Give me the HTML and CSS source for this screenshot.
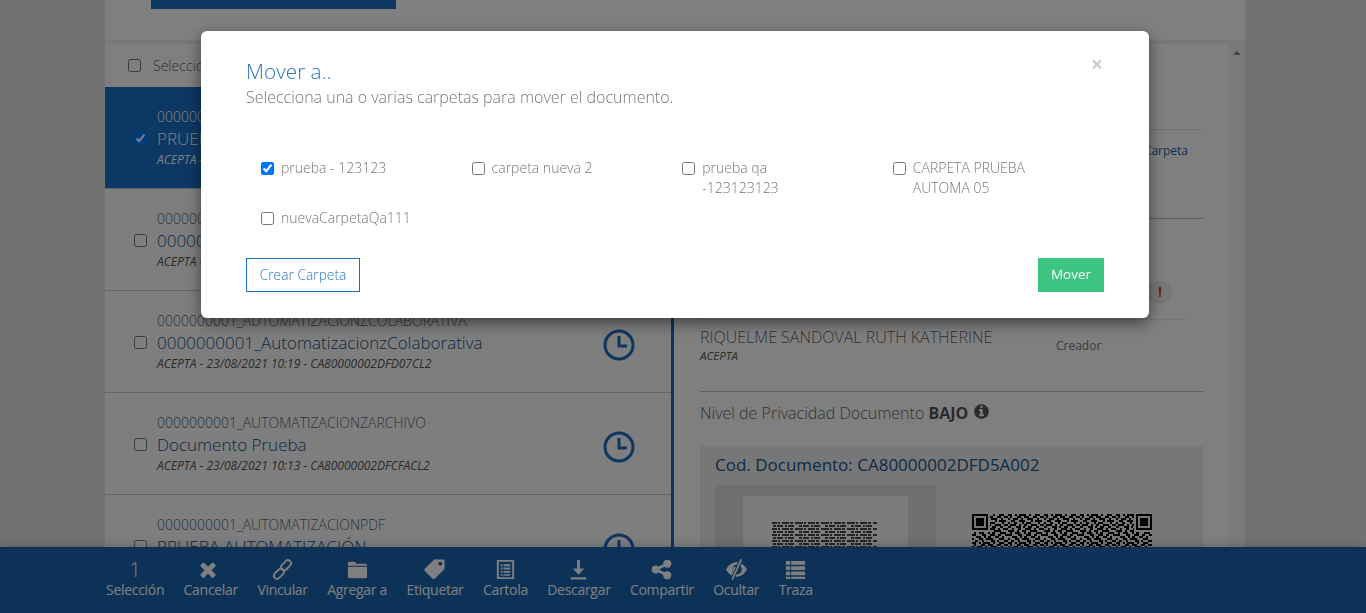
FILE: index.html
```html
<!DOCTYPE html>
<html lang="en">
<head>
  <meta charset="UTF-8">
  <meta name="viewport" content="width=device-width, initial-scale=1.0">
  <title>Mover a..</title>
  <link rel="stylesheet" href="styles.css">
</head>
<body>
  <svg class="defs" width="0" height="0">
    <defs>
      <g id="clock">
        <circle cx="16" cy="16" r="14" fill="none" stroke="currentColor" stroke-width="3"/>
        <path d="M16 7v10h8" fill="none" stroke="currentColor" stroke-width="3"/>
      </g>
      <pattern id="qrTile" width="36" height="28" patternUnits="userSpaceOnUse">
        <path d="M0 0h4v2H0zM7 0h2v2H7zM11 0h7v2h-7zM21 0h2v2h-2zM27 0h5v2h-5zM2 2h2v2H2zM9 2h4v2H9zM16 2h5v2h-5zM25 2h4v2h-4zM32 2h4v2h-4zM0 4h2v2H0zM5 4h5v2H5zM13 4h2v2h-2zM19 4h6v2h-6zM29 4h2v2h-2zM3 6h4v2H3zM11 6h6v2h-6zM23 6h2v2h-2zM27 6h7v2h-7zM0 8h2v2H0zM6 8h3v2H6zM14 8h2v2h-2zM18 8h5v2h-5zM30 8h2v2h-2zM2 10h6v2H2zM11 10h2v2h-2zM16 10h3v2h-3zM23 10h6v2h-6zM32 10h4v2h-4zM0 12h3v2H0zM8 12h5v2H8zM15 12h2v2h-2zM20 12h4v2h-4zM28 12h3v2h-3zM4 14h2v2H4zM10 14h3v2h-3zM17 14h6v2h-6zM26 14h2v2h-2zM31 14h5v2h-5zM0 16h6v2H0zM9 16h2v2H9zM14 16h4v2h-4zM22 16h7v2h-7zM2 18h2v2H2zM7 18h5v2H7zM16 18h2v2h-2zM20 18h3v2h-3zM28 18h6v2h-6zM0 20h4v2H0zM10 20h4v2h-4zM18 20h5v2h-5zM26 20h3v2h-3zM33 20h3v2h-3zM4 22h5v2H4zM12 22h2v2h-2zM16 22h3v2h-3zM23 22h4v2h-4zM30 22h2v2h-2zM0 24h2v2H0zM7 24h4v2H7zM14 24h7v2h-7zM27 24h5v2h-5zM3 26h3v2H3zM10 26h2v2h-2zM19 26h4v2h-4zM25 26h2v2h-2zM32 26h4v2h-4z"/>
      </pattern>
      <pattern id="printTile" width="26" height="6" patternUnits="userSpaceOnUse">
        <path d="M0 0h5v2H0zM6 0h2v2H6zM10 0h7v2h-7zM18 0h3v2h-3zM23 0h3v2h-3zM1 3h3v2H1zM5 3h6v2H5zM13 3h2v2h-2zM16 3h6v2h-6z"/>
      </pattern>
    </defs>
  </svg>

  <div class="page">
    <div class="wrap">
      <div class="topCard">
        <div class="topButton"></div>
      </div>

      <div class="panels">
        <div class="docList">
          <div class="listHead">
            <input type="checkbox" class="check">
            <span>Seleccionar todos</span>
          </div>

          <div class="docRow selected">
            <input type="checkbox" class="check" checked>
            <div class="docText">
              <div class="docCode">0000000001_AUTOMATIZACION</div>
              <div class="docTitle">PRUEBA AUTOMATIZACIÓN</div>
              <div class="docMeta">ACEPTA - 23/08/2021 10:30 - CA80000002DFD5A002</div>
            </div>
            <svg class="clock" viewBox="0 0 32 32"><use href="#clock"/></svg>
          </div>

          <div class="docRow">
            <input type="checkbox" class="check">
            <div class="docText">
              <div class="docCode">0000000001_AUTOMATIZACION</div>
              <div class="docTitle">0000000001_Automatizacion</div>
              <div class="docMeta">ACEPTA - 23/08/2021 10:25 - CA80000002DFD3BCL2</div>
            </div>
            <svg class="clock" viewBox="0 0 32 32"><use href="#clock"/></svg>
          </div>

          <div class="docRow">
            <input type="checkbox" class="check">
            <div class="docText">
              <div class="docCode">0000000001_AUTOMATIZACIONZCOLABORATIVA</div>
              <div class="docTitle">0000000001_AutomatizacionzColaborativa</div>
              <div class="docMeta">ACEPTA - 23/08/2021 10:19 - CA80000002DFD07CL2</div>
            </div>
            <svg class="clock" viewBox="0 0 32 32"><use href="#clock"/></svg>
          </div>

          <div class="docRow">
            <input type="checkbox" class="check">
            <div class="docText">
              <div class="docCode">0000000001_AUTOMATIZACIONZARCHIVO</div>
              <div class="docTitle">Documento Prueba</div>
              <div class="docMeta">ACEPTA - 23/08/2021 10:13 - CA80000002DFCFACL2</div>
            </div>
            <svg class="clock" viewBox="0 0 32 32"><use href="#clock"/></svg>
          </div>

          <div class="docRow">
            <input type="checkbox" class="check">
            <div class="docText">
              <div class="docCode">0000000001_AUTOMATIZACIONPDF</div>
              <div class="docTitle">PRUEBA AUTOMATIZACIÓN</div>
              <div class="docMeta">ACEPTA - 23/08/2021 10:10 - CA80000002DFCE1CL2</div>
            </div>
            <svg class="clock" viewBox="0 0 32 32"><use href="#clock"/></svg>
          </div>
        </div>

        <div class="detail">
          <div class="detailBody">
            <div class="block blockHead"></div>
            <div class="block blockFolder">
              <a class="folderLink">Agregar a Carpeta</a>
            </div>
            <div class="signers">
              <div class="alertRow">
                <span class="alertDot">!</span>
              </div>
              <div class="signerRow">
                <div>
                  <div class="signerName">RIQUELME SANDOVAL RUTH KATHERINE</div>
                  <div class="signerOrg">ACEPTA</div>
                </div>
                <div class="signerRole">Creador</div>
              </div>
            </div>
            <div class="privacy">
              Nivel de Privacidad Documento <b>BAJO</b>
              <svg class="infoIcon" viewBox="0 0 1792 1792"><path d="M1152 1376v-160q0-14-9-23t-23-9h-96v-512q0-14-9-23t-23-9h-320q-14 0-23 9t-9 23v160q0 14 9 23t23 9h96v320h-96q-14 0-23 9t-9 23v160q0 14 9 23t23 9h448q14 0 23-9t9-23zm-128-896v-160q0-14-9-23t-23-9h-192q-14 0-23 9t-9 23v160q0 14 9 23t23 9h192q14 0 23-9t9-23zm640 416q0 209-103 385.500t-279.500 279.500-385.500 103-385.500-103-279.500-279.500-103-385.500 103-385.500 279.500-279.500 385.500-103 385.500 103 279.500 279.500 103 385.500z"/></svg>
            </div>
            <div class="codeBox">
              <div class="codeTitle">Cod. Documento: CA80000002DFD5A002</div>
              <div class="codeMedia">
                <div class="preview">
                  <div class="previewPage">
                    <svg class="printLines" width="105" height="60"><rect width="105" height="60" fill="url(#printTile)"/></svg>
                  </div>
                </div>
                <svg class="qr" width="180" height="180" viewBox="0 0 180 180">
                  <rect width="180" height="180" fill="url(#qrTile)"/>
                  <path fill="#eee" d="M0 0h18v18H0zM162 0h18v18h-18z"/>
                  <path fill-rule="evenodd" d="M0 0h16v16H0zM2 2v12h12V2zM4 4h8v8H4zM164 0h16v16h-16zM166 2v12h12V2zM168 4h8v8h-8z"/>
                </svg>
              </div>
            </div>
          </div>
          <div class="scrollTrack"><span class="scrollUp"></span></div>
        </div>
      </div>
    </div>

    <div class="actionBar">
      <div class="action">
        <span class="actionCount">1</span>
        <span>Selección</span>
      </div>
      <div class="action">
        <svg class="actionIcon" viewBox="0 0 1792 1792"><path d="M1298 1322q0 40-28 68l-136 136q-28 28-68 28t-68-28l-294-294-294 294q-28 28-68 28t-68-28l-136-136q-28-28-28-68t28-68l294-294-294-294q-28-28-28-68t28-68l136-136q28-28 68-28t68 28l294 294 294-294q28-28 68-28t68 28l136 136q28 28 28 68t-28 68l-294 294 294 294q28 28 28 68z"/></svg>
        <span>Cancelar</span>
      </div>
      <div class="action">
        <svg class="actionIcon" viewBox="0 0 24 24"><g fill="none" stroke="currentColor" stroke-width="1.900"><rect x="12.500" y="1.500" width="6.500" height="12" rx="3.250" transform="rotate(45 15.750 7.500)"/><rect x="5" y="10.500" width="6.500" height="12" rx="3.250" transform="rotate(45 8.250 16.500)"/></g></svg>
        <span>Vincular</span>
      </div>
      <div class="action">
        <svg class="actionIcon" viewBox="0 0 24 24"><path d="M2 8V5.500C2 4.700 2.700 4 3.500 4h5.500l2 2h9.500c.8 0 1.500.7 1.500 1.500V8zM2 9.200h20V19.500c0 .8-.7 1.500-1.500 1.500h-17C2.700 21 2 20.300 2 19.500z"/></svg>
        <span>Agregar a</span>
      </div>
      <div class="action">
        <svg class="actionIcon" viewBox="0 0 24 24"><path fill-rule="evenodd" d="M14 1.500h7c.8 0 1.500.7 1.500 1.500v7c0 1-.4 1.800-1 2.400l-9 9c-.8.8-2 .8-2.800 0l-7.600-7.600c-.8-.8-.8-2 0-2.800l9-9c.7-.7 1.500-1 2.900-.5zM18 4a2 2 0 1 0 0 4 2 2 0 0 0 0-4z"/></svg>
        <span>Etiquetar</span>
      </div>
      <div class="action">
        <svg class="actionIcon" viewBox="0 0 24 24"><path fill-rule="evenodd" d="M3 2h18v20H3zM5 4v16h14V4zM7 6.500h2v2H7zM10 6.500h7v2h-7zM7 10h2v2H7zM10 10h7v2h-7zM7 13.500h2v2H7zM10 13.500h7v2h-7zM7 17h2v1.500H7zM10 17h7v1.500h-7z"/></svg>
        <span>Cartola</span>
      </div>
      <div class="action">
        <svg class="actionIcon" viewBox="0 0 24 24"><path d="M10.500 2h3v9h4.500l-6 6.500L6 11h4.500zM4 20h16v2.500H4z"/></svg>
        <span>Descargar</span>
      </div>
      <div class="action">
        <svg class="actionIcon" viewBox="0 0 1792 1792"><path d="M1344 1024q133 0 226.500 93.500t93.500 226.500-93.500 226.500-226.500 93.500-226.500-93.500-93.500-226.500q0-12 2-34l-360-180q-92 86-218 86-133 0-226.500-93.500t-93.500-226.500 93.500-226.500 226.500-93.500q126 0 218 86l360-180q-2-22-2-34 0-133 93.500-226.500t226.500-93.500 226.500 93.500 93.500 226.500-93.500 226.500-226.500 93.500q-126 0-218-86l-360 180q2 22 2 34t-2 34l360 180q92-86 218-86z"/></svg>
        <span>Compartir</span>
      </div>
      <div class="action">
        <svg class="actionIcon" viewBox="0 0 24 24">
          <path fill="#fff" d="M1 12C4 7 8 4.500 12 4.500S20 7 23 12c-3 5-7 7.500-11 7.500S4 17 1 12z"/>
          <circle class="barCut" cx="12.500" cy="12" r="5"/>
          <circle fill="#fff" cx="10.500" cy="12" r="2.800"/>
          <path class="barCutLine" d="M17 1.500L7.500 22.500"/>
          <path class="eyeSlash" d="M17 1.500L7.500 22.500"/>
        </svg>
        <span>Ocultar</span>
      </div>
      <div class="action">
        <svg class="actionIcon" viewBox="0 0 24 24"><path d="M2 3h4.500v4H2zM7.500 3H22v4H7.500zM2 8.500h4.500v4H2zM7.500 8.500H22v4H7.500zM2 14h4.500v4H2zM7.500 14H22v4H7.500zM2 19.500h4.500v2.500H2zM7.500 19.500H22v2.500H7.500z"/></svg>
        <span>Traza</span>
      </div>
    </div>
  </div>

  <div class="backdrop"></div>

  <div class="modal">
    <span class="modalClose">×</span>
    <h2 class="modalTitle">Mover a..</h2>
    <p class="modalSub">Selecciona una o varias carpetas para mover el documento.</p>

    <div class="folderGrid">
      <label class="folder"><input type="checkbox" checked><span>prueba - 123123</span></label>
      <label class="folder"><input type="checkbox"><span>carpeta nueva 2</span></label>
      <label class="folder"><input type="checkbox"><span>prueba qa -123123123</span></label>
      <label class="folder"><input type="checkbox"><span>CARPETA PRUEBA AUTOMA 05</span></label>
      <label class="folder"><input type="checkbox"><span>nuevaCarpetaQa111</span></label>
    </div>

    <div class="modalFoot">
      <button class="btnOutline">Crear Carpeta</button>
      <button class="btnGreen">Mover</button>
    </div>
  </div>
</body>
</html>
```

FILE: styles.css
```css
* {
  box-sizing: border-box;
}

html,
body {
  height: 100%;
}

body {
  margin: 0;
  overflow: hidden;
  font-family: 'Open Sans', sans-serif;
  font-weight: 300;
  color: #666;
  background-color: #e5e5e5;
}

.defs {
  position: absolute;
}

.page {
  height: 100%;
  display: flex;
  flex-direction: column;
}

.wrap {
  flex: 1;
  min-height: 0;
  width: 1140px;
  margin-left: 105px;
  background-color: #fff;
  display: flex;
  flex-direction: column;
  overflow: hidden;
}

.topCard {
  flex: none;
  height: 40px;
  padding-left: 46px;
}

.topButton {
  width: 245px;
  height: 9px;
  background-color: #1a6cc2;
}

.panels {
  flex: 1;
  min-height: 0;
  display: flex;
  border-top: 4px solid #f0f0f0;
}

/* document list */
.docList {
  flex: none;
  width: 569px;
  border-right: 3px solid #1a6cc2;
}

.listHead {
  height: 43px;
  padding-left: 23px;
  display: flex;
  align-items: center;
  gap: 12px;
  font-size: 14px;
  background-color: #fff;
}

.check {
  flex: none;
  width: 13px;
  height: 13px;
  margin: 0;
}

.docRow {
  height: 102px;
  padding: 20px 36px 0 29px;
  display: flex;
  align-items: flex-start;
  border-bottom: 1px solid #ccc;
  background-color: #fcfcfc;
}

.docRow .check {
  margin: 25px 10px 0 0;
}

.docText {
  flex: 1;
  min-width: 0;
  white-space: nowrap;
}

.docCode {
  font-size: 14px;
  line-height: 20px;
  color: #666;
}

.docTitle {
  font-size: 17px;
  line-height: 24px;
  color: #1a4f88;
}

.docMeta {
  font-size: 12px;
  line-height: 18px;
  font-style: italic;
  font-weight: 400;
  color: #555;
}

.clock {
  flex: none;
  width: 32px;
  height: 32px;
  margin-top: 18px;
  color: #1a6cc2;
}

.selected {
  background-color: #1a70c8;
}

.selected .docCode,
.selected .docTitle,
.selected .docMeta {
  color: #fff;
}

.selected .clock {
  color: #fff;
}

/* detail */
.detail {
  flex: 1;
  min-width: 0;
  display: flex;
}

.detailBody {
  flex: 1;
  min-width: 0;
  padding: 0 25px 0 26px;
}

.scrollTrack {
  flex: none;
  width: 17px;
  background-color: #f4f4f4;
  display: flex;
  justify-content: center;
  padding-top: 7px;
}

.scrollUp {
  width: 0;
  height: 0;
  border-left: 4px solid transparent;
  border-right: 4px solid transparent;
  border-bottom: 4px solid #888;
}

.block {
  border-bottom: 1px solid #e5e5e5;
}

.blockHead {
  height: 86px;
}

.blockFolder {
  height: 89px;
  padding: 8px 15px 0 0;
  text-align: right;
  border-bottom-color: #bbb;
}

.folderLink {
  font-size: 12px;
  color: #1a5fa8;
  font-weight: 400;
}

.signers {
  height: 173px;
  border-bottom: 1px solid #bbb;
}

.alertRow {
  height: 101px;
  margin-right: 15px;
  padding: 61px 16px 0 0;
  display: flex;
  justify-content: flex-end;
  border-bottom: 1px solid #eee;
}

.alertDot {
  width: 24px;
  height: 24px;
  border-radius: 50%;
  background-color: #eee;
  color: #d9302c;
  font-weight: 700;
  font-size: 14px;
  line-height: 24px;
  text-align: center;
}

.signerRow {
  display: flex;
  padding-top: 6px;
}

.signerRow > div:first-child {
  width: 356px;
}

.signerName {
  font-size: 16px;
  line-height: 22px;
  white-space: nowrap;
}

.signerOrg {
  font-size: 11.500px;
  line-height: 16px;
  font-style: italic;
  font-weight: 400;
  color: #555;
}

.signerRole {
  font-size: 12px;
  font-weight: 400;
  padding-top: 11px;
  color: #777;
}

.privacy {
  height: 54px;
  padding-top: 8px;
  font-size: 16px;
  line-height: 26px;
  white-space: nowrap;
}

.privacy b {
  font-weight: 700;
  color: #555;
}

.infoIcon {
  width: 17px;
  height: 17px;
  margin-left: 1px;
  fill: #555;
  vertical-align: -1px;
}

.codeBox {
  background-color: #eee;
  padding: 8px 15px 0;
  height: 300px;
}

.codeTitle {
  font-size: 17px;
  line-height: 22px;
  font-weight: 400;
  color: #1a5590;
}

.codeMedia {
  display: flex;
  margin-top: 9px;
}

.preview {
  flex: none;
  width: 221px;
  height: 200px;
  background-color: #dedede;
  padding: 11px 28px 0;
}

.previewPage {
  height: 180px;
  background-color: #f8f8f8;
  padding: 26px 0 0 29px;
}

.printLines {
  display: block;
  fill: #444;
  opacity: 0.7;
  filter: blur(0.6px);
}

.qr {
  flex: none;
  display: block;
  margin: 29px 0 0 36px;
  fill: #000;
}

/* bottom bar */
.actionBar {
  flex: none;
  position: relative;
  height: 66px;
  padding: 11px 0 0 106px;
  display: flex;
  align-items: flex-start;
  gap: 19.400px;
  background-color: #1a65b0;
  box-shadow: 0 0 10px rgba(0, 0, 0, 0.25);
  color: #fff;
  font-size: 14px;
  font-weight: 400;
  letter-spacing: -0.300px;
}

.action {
  display: flex;
  flex-direction: column;
  align-items: center;
  line-height: 20px;
}

.actionIcon {
  width: 23px;
  height: 23px;
  margin-bottom: -1px;
  fill: #fff;
  color: #fff;
}

.barCut {
  fill: #1a65b0;
}

.barCutLine {
  fill: none;
  stroke: #1a65b0;
  stroke-width: 4;
}

.eyeSlash {
  fill: none;
  stroke: #fff;
  stroke-width: 1.800;
}

.actionCount {
  height: 22px;
  font-size: 20px;
  font-weight: 300;
  line-height: 23px;
}

/* modal */
.backdrop {
  position: fixed;
  inset: 0;
  background-color: rgba(0, 0, 0, 0.5);
}

.modal {
  position: fixed;
  left: 201px;
  top: 31px;
  width: 948px;
  height: 287px;
  padding: 27px 45px 0;
  background-color: #fff;
  border-radius: 6px;
  box-shadow: 0 5px 15px rgba(0, 0, 0, 0.5);
  display: flex;
  flex-direction: column;
}

.modalClose {
  position: absolute;
  top: 22px;
  right: 46px;
  font-size: 21px;
  line-height: 22px;
  font-weight: 700;
  color: #ccc;
}

.modalTitle {
  margin: 0;
  font-size: 20.800px;
  line-height: 26px;
  font-weight: 300;
  color: #2a77c4;
}

.modalSub {
  margin: 3px 0 0;
  font-size: 16px;
  line-height: 20px;
  color: #777;
}

.folderGrid {
  display: grid;
  grid-template-columns: repeat(4, 210.600px);
  grid-auto-rows: 50px;
  margin-top: 51px;
  padding-left: 15px;
  height: 100px;
}

.folder {
  display: flex;
  gap: 7px;
  font-size: 14px;
  line-height: 20px;
  color: #777;
  width: 150px;
}

.folder input {
  flex: none;
  width: 13px;
  height: 13px;
  margin: 4px 0 0 0;
}

.modalFoot {
  display: flex;
  justify-content: space-between;
}

.btnOutline,
.btnGreen {
  height: 34px;
  padding: 0 0 2px;
  font-family: inherit;
  border-radius: 0;
  cursor: pointer;
}

.btnOutline {
  width: 114px;
  background-color: #fff;
  border: 1px solid #1a6cc2;
  color: #2a77c4;
  font-size: 13.800px;
  font-weight: 300;
}

.btnGreen {
  width: 66px;
  background-color: #3cc480;
  border: none;
  color: #fff;
  font-size: 13.500px;
  font-weight: 400;
}
```
